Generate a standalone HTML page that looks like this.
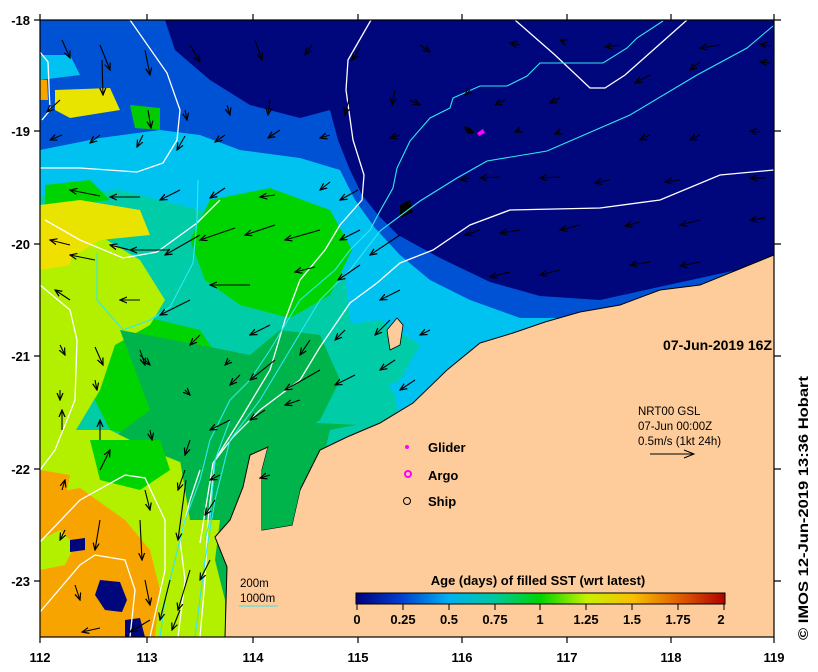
<!DOCTYPE html>
<html><head><meta charset="utf-8"><style>
html,body{margin:0;padding:0;background:#fff;width:818px;height:672px;overflow:hidden}
svg{display:block}
text{font-family:"Liberation Sans",Arial,sans-serif}
</style></head><body>
<svg width="818" height="672" viewBox="0 0 818 672" xmlns="http://www.w3.org/2000/svg">
<defs>
<marker id="ah" markerWidth="8" markerHeight="8" refX="7" refY="4" orient="auto" markerUnits="userSpaceOnUse">
<path d="M0,1 L7,4 L0,7" fill="none" stroke="#000" stroke-width="1.2"/>
</marker>
<linearGradient id="cb" x1="0" x2="1" y1="0" y2="0">
<stop offset="0" stop-color="#00007f"/>
<stop offset="0.125" stop-color="#0040d0"/>
<stop offset="0.25" stop-color="#00b0f0"/>
<stop offset="0.375" stop-color="#00c8a0"/>
<stop offset="0.5" stop-color="#00d400"/>
<stop offset="0.625" stop-color="#c8f000"/>
<stop offset="0.75" stop-color="#f8c000"/>
<stop offset="0.875" stop-color="#e06000"/>
<stop offset="1" stop-color="#b00000"/>
</linearGradient>
<clipPath id="map"><rect x="40" y="20" width="734" height="617"/></clipPath>
</defs>
<g clip-path="url(#map)">
<rect x="40" y="20" width="734" height="617" fill="#00067c"/>
<!-- blue -->
<path d="M40,20 L165,20 L175,50 L210,80 L250,105 L300,118 L330,110 L338,140 L350,170 L362,195 L378,215 L398,235 L440,258 L490,282 L540,296 L600,300 L700,278 L774,262 L774,330 L40,330Z" fill="#0052d4"/>
<path d="M60,20 L100,20 L110,35 L90,45 L60,40Z" fill="#0052d4"/>
<!-- light blue -->
<path d="M40,150 L100,138 L160,130 L200,135 L240,150 L300,158 L340,170 L355,200 L375,228 L400,255 L430,280 L470,300 L520,318 L570,318 L540,360 L460,380 L420,410 L380,430 L40,430Z" fill="#00c2f0"/>
<path d="M40,55 L70,55 L80,75 L40,80Z" fill="#00c2f0"/>
<!-- teal -->
<path d="M40,195 L120,190 L200,210 L260,232 L310,245 L345,275 L350,320 L370,360 L395,395 L400,425 L330,445 L260,470 L40,470Z" fill="#00cca8"/>
<path d="M310,330 L380,320 L420,345 L400,380 L360,400 L320,380Z" fill="#00cca8"/>
<path d="M250,420 L360,425 L330,460 L310,520 L270,560 L230,600 L225,637 L200,637 L210,500Z" fill="#00b44c"/>
<path d="M330,430 L380,420 L340,450 L320,470Z" fill="#00cca8"/>
<!-- bright green -->
<path d="M210,200 L270,188 L330,210 L352,250 L330,295 L290,318 L240,305 L205,280 L190,240Z" fill="#00d400"/>
<path d="M100,345 L150,318 L200,330 L220,360 L200,400 L160,440 L110,430 L90,390Z" fill="#00d400"/>
<path d="M45,185 L90,180 L110,200 L70,205 L45,205Z" fill="#00d400"/>
<!-- yellow-green -->
<path d="M40,240 L100,236 L140,260 L165,300 L150,325 L115,345 L100,390 L70,440 L40,450Z" fill="#b2f000"/>
<path d="M55,90 L110,88 L120,110 L70,118 L55,110Z" fill="#e8e400"/>
<path d="M40,205 L80,200 L140,210 L150,235 L100,240 L60,265 L40,265Z" fill="#e8e400"/>
<path d="M40,225 L75,230 L70,265 L40,270Z" fill="#f0e000"/>
<path d="M130,105 L160,108 L160,130 L135,128Z" fill="#00cc00"/>
<!-- mid green -->
<path d="M120,330 L200,345 L250,355 L280,330 L320,335 L340,380 L320,420 L290,440 L265,470 L235,520 L215,560 L170,540 L130,510 L100,480 L110,440 L150,410Z" fill="#00b44c"/>
<!-- lower left -->
<path d="M40,430 L110,430 L150,450 L200,470 L220,520 L215,560 L225,600 L225,637 L40,637Z" fill="#b2f000"/>
<path d="M90,440 L160,440 L170,470 L140,490 L100,480Z" fill="#00d400"/>
<path d="M180,460 L230,470 L220,520 L190,520Z" fill="#00b44c"/>
<path d="M40,495 L80,488 L125,520 L150,550 L160,590 L155,637 L40,637Z" fill="#f8a400"/>
<path d="M40,470 L70,475 L65,500 L40,505Z" fill="#f8a400"/>
<path d="M40,540 L60,530 L75,545 L65,565 L40,570Z" fill="#b2f000"/>
<path d="M100,580 L120,582 L127,600 L122,612 L105,610 L95,595Z" fill="#00067c"/>
<path d="M70,540 L85,538 L85,550 L70,552Z" fill="#00067c"/>
<path d="M125,620 L140,618 L145,637 L125,637Z" fill="#00067c"/>
<path d="M40,80 L47,80 L48,100 L40,100Z" fill="#f8a400"/>
<!-- land -->
<path d="M774,255 L700,285 L660,290 L620,305 L580,312 L545,322 L513,333 L480,343 L447,370 L413,403 L380,423 L347,437 L320,450 L310,470 L300,490 L292,525 L262,530 L262,470 L268,447 L250,455 L243,487 L230,520 L215,537 L227,567 L225,637 L774,637Z" fill="#fdcc9a" stroke="#000" stroke-width="1"/>
<path d="M262,470 L268,447 L275,450 L300,490 L292,525 L262,530Z" fill="#00b44c"/>
<path d="M387,330 L397,318 L403,325 L400,345 L390,350Z" fill="#fdcc9a" stroke="#000" stroke-width="0.8"/>
<path d="M400,205 L410,200 L413,212 L400,218Z" fill="#000"/>
<path d="M463,126 L470,128 L475,133 L468,134Z" fill="#000"/>
<path d="M477,133 L483,129 L485,133 L479,136Z" fill="#ff00ff"/>
<!-- contours white -->
<g fill="none" stroke="#fff" stroke-width="1.3">
<path d="M371,20 L348,60 L346,90 L353,140 L364,175 L362,200 L340,225 L325,250 L300,280 L285,320 L270,370 L240,420 L215,460 L208,520 L205,580 L200,637"/>
<path d="M515,20 L555,55 L590,88 L605,88 L625,75 L687,20"/>
<path d="M200,543 L213,463 L233,437 L260,410 L300,380 L320,347 L350,303 L377,283 L400,263 L433,250 L470,225 L510,210 L600,208 L660,200 L720,175 L774,170"/>
<path d="M130,20 L167,73 L180,110 L177,140 L163,163 L137,172 L80,168 L40,168"/>
<path d="M40,52 L48,62 L50,110 L42,120"/>
<path d="M45,220 L80,240 L123,258 L157,252 L197,223 L220,200"/>
<path d="M40,285 L70,310 L77,340 L75,400 L55,450 L40,470"/>
<path d="M40,542 L80,500 L125,475 L145,478 L165,520 L165,570 L150,637"/>
<path d="M40,612 L80,565 L95,555 L125,560 L135,590 L130,637"/>
<path d="M178,637 L185,580 L180,540 L190,500 L200,470"/>
</g>
<g fill="none" stroke="#30e8f0" stroke-width="1.1">
<path d="M773,26 L747,48 L697,75 L630,115 L547,151 L487,161 L457,178 L420,201 L380,231 L350,270 L320,300 L290,350 L260,400 L230,440 L215,500 L205,560 L195,637"/>
<path d="M663,21 L637,38 L627,48 L603,63 L540,63 L527,76 L507,86 L480,86 L453,98 L450,108 L430,118 L410,141 L397,168 L393,188 L380,211 L370,230 L350,250 L335,270 L300,300 L270,350 L250,380 L230,400 L210,440 L200,480 L185,520 L175,560 L165,600 L160,637"/>
<path d="M97,253 L97,300 L123,330 L150,320 L170,307 L193,263 L197,220 L198,180"/>
<path d="M230,420 L215,460 L210,520 L205,540"/>
</g>
<!-- arrows -->
<g stroke="#000" stroke-width="1.1" fill="none" marker-end="url(#ah)">
<path d="M62,40 L70,58"/><path d="M100,45 L110,70"/><path d="M145,50 L150,75"/><path d="M190,45 L200,62"/><path d="M255,40 L262,60"/><path d="M312,45 L305,55"/><path d="M360,48 L352,60"/><path d="M420,45 L430,52"/><path d="M520,45 L510,43"/><path d="M565,42 L560,40"/><path d="M620,45 L605,47"/><path d="M720,45 L700,48"/><path d="M770,46 L760,44"/>
<path d="M102,60 L103,95"/><path d="M60,100 L47,112"/><path d="M148,110 L151,128"/><path d="M185,110 L187,120"/><path d="M227,105 L230,115"/><path d="M270,100 L268,115"/><path d="M350,95 L345,115"/><path d="M395,90 L392,105"/><path d="M410,100 L420,105"/><path d="M470,90 L465,95"/><path d="M505,100 L495,105"/><path d="M560,98 L550,103"/><path d="M650,75 L635,83"/><path d="M700,62 L690,70"/><path d="M770,63 L760,62"/>
<path d="M62,135 L50,140"/><path d="M100,135 L90,143"/><path d="M143,135 L137,147"/><path d="M185,136 L177,150"/><path d="M225,135 L215,142"/><path d="M280,130 L268,138"/><path d="M330,135 L320,138"/><path d="M400,135 L390,138"/><path d="M520,130 L515,132"/><path d="M560,132 L555,134"/><path d="M650,135 L640,140"/><path d="M700,135 L690,140"/><path d="M760,132 L750,131"/>
<path d="M100,196 L70,190"/><path d="M140,197 L110,197"/><path d="M180,190 L160,200"/><path d="M225,188 L210,198"/><path d="M275,195 L260,197"/><path d="M330,182 L320,190"/><path d="M358,190 L340,200"/><path d="M470,178 L460,180"/><path d="M500,177 L480,178"/><path d="M560,177 L540,178"/><path d="M610,180 L595,183"/><path d="M680,180 L665,182"/><path d="M765,178 L750,178"/>
<path d="M70,245 L50,240"/><path d="M95,260 L70,255"/><path d="M130,250 L110,245"/><path d="M170,250 L130,250"/><path d="M200,235 L165,255"/><path d="M235,228 L200,240"/><path d="M275,225 L245,235"/><path d="M320,230 L285,240"/><path d="M360,230 L340,240"/><path d="M400,235 L370,255"/><path d="M480,230 L465,235"/><path d="M520,230 L500,233"/><path d="M580,225 L560,230"/><path d="M640,222 L625,226"/><path d="M700,220 L680,225"/><path d="M765,218 L750,220"/>
<path d="M70,300 L55,290"/><path d="M140,300 L120,300"/><path d="M190,300 L160,315"/><path d="M250,285 L210,285"/><path d="M315,267 L295,272"/><path d="M360,265 L338,280"/><path d="M400,290 L380,300"/><path d="M510,272 L490,277"/><path d="M560,270 L540,275"/><path d="M650,262 L630,265"/><path d="M700,262 L680,266"/>
<path d="M60,345 L65,355"/><path d="M95,347 L103,365"/><path d="M140,350 L145,365"/><path d="M200,335 L190,345"/><path d="M230,360 L225,365"/><path d="M270,325 L250,335"/><path d="M310,340 L300,355"/><path d="M345,330 L335,340"/><path d="M390,320 L375,335"/><path d="M430,330 L420,335"/>
<path d="M60,390 L60,400"/><path d="M95,380 L97,390"/><path d="M140,355 L150,365"/><path d="M185,390 L190,395"/><path d="M240,375 L230,385"/><path d="M275,360 L250,380"/><path d="M320,370 L285,390"/><path d="M355,375 L335,385"/><path d="M395,360 L380,370"/><path d="M415,380 L400,390"/>
<path d="M62,430 L62,410"/><path d="M100,440 L100,420"/><path d="M150,430 L152,440"/><path d="M190,440 L185,455"/><path d="M230,420 L210,430"/><path d="M265,410 L250,420"/><path d="M300,400 L285,405"/>
<path d="M62,490 L65,480"/><path d="M100,470 L110,450"/><path d="M145,490 L150,510"/><path d="M185,470 L178,490"/><path d="M220,475 L210,480"/><path d="M270,475 L260,478"/>
<path d="M65,530 L60,540"/><path d="M100,520 L95,550"/><path d="M140,520 L142,560"/><path d="M186,480 L178,540"/><path d="M215,500 L205,515"/>
<path d="M75,585 L80,600"/><path d="M145,580 L150,605"/><path d="M170,580 L160,620"/><path d="M190,570 L178,610"/><path d="M210,560 L200,580"/>
<path d="M100,628 L82,632"/><path d="M150,620 L130,632"/><path d="M180,610 L172,630"/>
</g>
</g>
<!-- frame -->
<rect x="40" y="20" width="734" height="617" fill="none" stroke="#000" stroke-width="1.2"/>
<g stroke="#000" stroke-width="1.2">
<path d="M40,14V20M147,14V20M253,14V20M358,14V20M462,14V20M567,14V20M671,14V20M774,14V20"/>
<path d="M40,637V643M147,637V643M253,637V643M358,637V643M462,637V643M567,637V643M671,637V643M774,637V643"/>
<path d="M34,20H40M34,131H40M34,244H40M34,356H40M34,469H40M34,581H40"/>
<path d="M774,20H781M774,131H781M774,244H781M774,356H781M774,469H781M774,581H781"/>
</g>
<g font-size="13" font-weight="bold" fill="#000">
<text x="30" y="25" text-anchor="end">-18</text>
<text x="30" y="136" text-anchor="end">-19</text>
<text x="30" y="249" text-anchor="end">-20</text>
<text x="30" y="361" text-anchor="end">-21</text>
<text x="30" y="474" text-anchor="end">-22</text>
<text x="30" y="586" text-anchor="end">-23</text>
<text x="40" y="662" text-anchor="middle">112</text>
<text x="147" y="662" text-anchor="middle">113</text>
<text x="253" y="662" text-anchor="middle">114</text>
<text x="358" y="662" text-anchor="middle">115</text>
<text x="462" y="662" text-anchor="middle">116</text>
<text x="567" y="662" text-anchor="middle">117</text>
<text x="671" y="662" text-anchor="middle">118</text>
<text x="774" y="662" text-anchor="middle">119</text>
</g>
<text x="772" y="350" text-anchor="end" font-size="14" font-weight="bold">07-Jun-2019 16Z</text>
<g font-size="11.5">
<text x="638" y="415">NRT00 GSL</text>
<text x="638" y="430">07-Jun 00:00Z</text>
<text x="638" y="445">0.5m/s (1kt 24h)</text>
</g>
<path d="M650,454 L694,454 M684,450 L694,454 L684,458" stroke="#000" stroke-width="1" fill="none"/>
<circle cx="407" cy="447" r="2" fill="#ff00ff"/>
<circle cx="408" cy="474" r="3" fill="none" stroke="#ff00ff" stroke-width="2"/>
<circle cx="407" cy="501" r="3.5" fill="none" stroke="#000" stroke-width="1"/>
<g font-size="13" font-weight="bold">
<text x="428" y="452">Glider</text>
<text x="428" y="480">Argo</text>
<text x="428" y="506">Ship</text>
</g>
<g font-size="11.5">
<text x="240" y="587">200m</text>
<text x="240" y="602">1000m</text>
</g>
<path d="M239,606 L278,606" stroke="#30e8f0" stroke-width="1"/>
<text x="538" y="585" text-anchor="middle" font-size="13" font-weight="bold">Age (days) of filled SST (wrt latest)</text>
<rect x="356" y="593" width="369" height="11" fill="url(#cb)" stroke="#000" stroke-width="1"/>
<g stroke="#000" stroke-width="1"><path d="M357,604V610M403,604V610M449,604V610M495,604V610M540,604V610M586,604V610M632,604V610M678,604V610M724,604V610"/></g>
<g font-size="13" font-weight="bold" text-anchor="middle">
<text x="357" y="624">0</text><text x="403" y="624">0.25</text><text x="449" y="624">0.5</text><text x="495" y="624">0.75</text><text x="540" y="624">1</text><text x="586" y="624">1.25</text><text x="632" y="624">1.5</text><text x="678" y="624">1.75</text><text x="721" y="624">2</text>
</g>
<text transform="translate(808,640) rotate(-90)" font-size="14" font-weight="bold" textLength="264" lengthAdjust="spacingAndGlyphs">© IMOS 12-Jun-2019 13:36 Hobart</text>
</svg>
</body></html>
